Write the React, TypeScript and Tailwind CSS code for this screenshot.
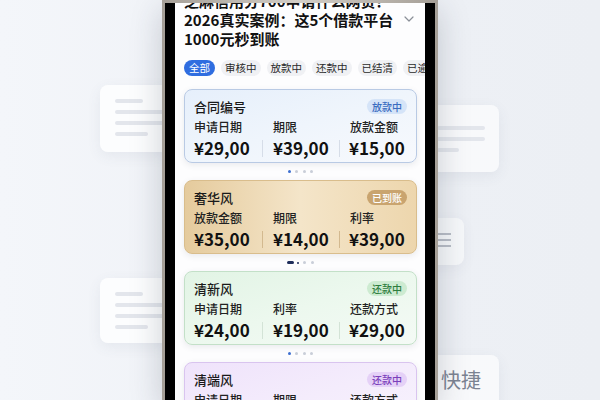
import React from "react";

type Card = {
  title: string;
  badge: string;
  labels: [string, string, string];
  values: [string, string, string];
  cardCls: string;
  badgeCls: string;
  divCls: string;
  dots: "blue" | "navy";
};

const cards: Card[] = [
  {
    title: "合同编号",
    badge: "放款中",
    labels: ["申请日期", "期限", "放款金额"],
    values: ["¥29,00", "¥39,00", "¥15,00"],
    cardCls: "border-[#b9cae4] bg-gradient-to-br from-[#e6effb] via-[#eff5fc] to-[#f7f9fd]",
    badgeCls: "bg-[#d5e4f8] text-[#3a6cc0]",
    divCls: "bg-[#d6dde8]",
    dots: "blue",
  },
  {
    title: "奢华风",
    badge: "已到账",
    labels: ["放款金额", "期限", "利率"],
    values: ["¥35,00", "¥14,00", "¥39,00"],
    cardCls: "border-[#d9bd8c] bg-gradient-to-r from-[#e5cb9d] via-[#f4e5c9] to-[#edd6ad]",
    badgeCls: "bg-[#c9a46f] text-white",
    divCls: "bg-[#d3b98f]",
    dots: "navy",
  },
  {
    title: "清新风",
    badge: "还款中",
    labels: ["申请日期", "利率", "还款方式"],
    values: ["¥24,00", "¥19,00", "¥29,00"],
    cardCls: "border-[#c3e0c8] bg-gradient-to-br from-[#e2f4e5] via-[#ecf8ee] to-[#f4faf5]",
    badgeCls: "bg-[#cdebd1] text-[#2e7d3e]",
    divCls: "bg-[#d3e3d6]",
    dots: "blue",
  },
  {
    title: "清端风",
    badge: "还款中",
    labels: ["申请日期", "期限", "还款方式"],
    values: ["¥24,00", "¥19,00", "¥29,00"],
    cardCls: "border-[#d9c4ef] bg-gradient-to-br from-[#efe3fb] via-[#f4ecfc] to-[#f8f3fd]",
    badgeCls: "bg-[#e5d1f7] text-[#7b3fbb]",
    divCls: "bg-[#e0d3ee]",
    dots: "blue",
  },
];

function Dots({ kind }: { kind: "blue" | "navy" }) {
  return (
    <div className="h-[17px] flex items-center justify-center gap-[4.5px]">
      {kind === "blue" ? (
        <span className="w-[3px] h-[3px] rounded-full bg-[#3d6fd0]" />
      ) : (
        <>
          <span className="w-[7px] h-[3px] rounded-full bg-[#1e2d5a]" />
          <span className="w-[2px] h-[2px] rounded-full bg-[#1e2d5a] -ml-[2px]" />
        </>
      )}
      <span className="w-[3px] h-[3px] rounded-full bg-[#c9ced8]" />
      <span className="w-[3px] h-[3px] rounded-full bg-[#c9ced8]" />
      {kind === "blue" && <span className="w-[3px] h-[3px] rounded-full bg-[#c9ced8]" />}
    </div>
  );
}

function LoanCard({ c }: { c: Card }) {
  return (
    <div className={`shrink-0 h-[74px] rounded-[8px] border px-[9px] pt-[8px] shadow-[0_2px_6px_rgba(60,70,90,0.10)] ${c.cardCls}`}>
      <div className="h-[17px] flex items-center justify-between">
        <span className="text-[13px] leading-[17px] font-medium text-[#1a1a1a]">{c.title}</span>
        <span className={`h-[15px] px-[5px] rounded-full text-[10px] leading-[15px] font-medium ${c.badgeCls}`}>{c.badge}</span>
      </div>
      <div className="mt-[4px] h-[16px] flex text-[12px] leading-[16px] font-medium text-[#222]">
        <span className="w-[79px]">{c.labels[0]}</span>
        <span className="w-[77px]">{c.labels[1]}</span>
        <span>{c.labels[2]}</span>
      </div>
      <div className="mt-[3px] h-[20px] flex items-center text-[17px] leading-[20px] font-bold text-[#111]">
        <span className="w-[68px]">{c.values[0]}</span>
        <span className={`w-px h-[17px] ${c.divCls}`} />
        <span className="w-[10px]" />
        <span className="w-[66px]">{c.values[1]}</span>
        <span className={`w-px h-[17px] ${c.divCls}`} />
        <span className="w-[9px]" />
        <span>{c.values[2]}</span>
      </div>
    </div>
  );
}

function Lines({ widths }: { widths: number[] }) {
  return (
    <div className="flex flex-col gap-[7px]">
      {widths.map((w, i) => (
        <span key={i} className="h-[4px] rounded-full bg-[#e3e6ec]" style={{ width: w }} />
      ))}
    </div>
  );
}

export default function App() {
  const tabs = ["审核中", "放款中", "还款中", "已结清", "已逾期"];
  return (
    <div
      className="relative w-[600px] h-[400px] overflow-hidden bg-gradient-to-r from-[#f4f6fa] via-[#eef1f6] to-[#eceff4] flex justify-center"
      style={{ fontFamily: '"Noto Sans CJK SC", "Noto Sans", sans-serif' }}
    >
      {/* decorative floating cards */}
      <div className="absolute left-[100px] top-[85px] w-[70px] h-[67px] rounded-[8px] bg-white/80 shadow-[0_4px_14px_rgba(80,90,120,0.08)] pl-[15px] pt-[14px]">
        <Lines widths={[28, 55, 55, 33]} />
      </div>
      <div className="absolute left-[100px] top-[278px] w-[70px] h-[65px] rounded-[8px] bg-white/80 shadow-[0_4px_14px_rgba(80,90,120,0.08)] pl-[15px] pt-[14px]">
        <Lines widths={[28, 55, 55, 33]} />
      </div>
      <div className="absolute left-[420px] top-[105px] w-[79px] h-[67px] rounded-[8px] bg-white/60 shadow-[0_4px_14px_rgba(80,90,120,0.08)] pl-[17px] pt-[21px]">
        <Lines widths={[48, 48, 22]} />
      </div>
      <div className="absolute left-[420px] top-[218px] w-[44px] h-[47px] rounded-[8px] bg-white/50 shadow-[0_4px_14px_rgba(80,90,120,0.06)] pl-[17px] pt-[15px]">
        <div className="flex flex-col gap-[4px]">
          <span className="w-[14px] h-[2px] bg-[#b8bdc6]" />
          <span className="w-[14px] h-[2px] bg-[#b8bdc6]" />
          <span className="w-[14px] h-[2px] bg-[#b8bdc6]" />
        </div>
      </div>
      <div className="absolute left-[420px] top-[355px] w-[79px] h-[60px] rounded-[8px] bg-white/60 shadow-[0_4px_14px_rgba(80,90,120,0.08)] pl-[21px] pt-[12px]">
        <span className="text-[20px] leading-[26px] text-[#7b8392]">快捷</span>
      </div>

      {/* phone */}
      <div className="relative w-[276px] h-[400px] p-[3px] pb-0 bg-gradient-to-r from-[#a59f97] via-[#d3cec7] to-[#a59f97] shadow-[0_10px_30px_rgba(40,50,70,0.22)]">
        <div className="w-full h-full bg-black px-[10px]">
          <div className="w-full h-full bg-[#fdfdfe] overflow-hidden pl-[9px] pr-[8px] flex flex-col">
            <div className="mt-[-12px] flex items-center">
              <div className="flex-1 text-[15px] leading-[19px] font-bold text-[#111] whitespace-nowrap">
                <div>芝麻信用分700申请什么网贷？</div>
                <div>2026真实案例：这5个借款平台</div>
                <div>1000元秒到账</div>
              </div>
              <svg width="10" height="6" viewBox="0 0 10 6" className="mr-[3px] mb-[1px]">
                <path d="M1 1 L5 5 L9 1" fill="none" stroke="#8a8f98" strokeWidth="1.2" strokeLinecap="round" strokeLinejoin="round" />
              </svg>
            </div>
            <div className="mt-[12px] h-[16px] flex gap-[6px] whitespace-nowrap">
              <span className="h-[16px] px-[5px] rounded-full bg-[#2f6de0] text-white text-[10.5px] leading-[16px]">全部</span>
              {tabs.map((t) => (
                <span key={t} className="h-[16px] px-[4px] rounded-full bg-[#f0f1f4] text-[#2a2a2a] text-[10.5px] leading-[16px]">
                  {t}
                </span>
              ))}
            </div>
            <div className="mt-[13px] flex flex-col">
              {cards.map((c, i) => (
                <React.Fragment key={i}>
                  <LoanCard c={c} />
                  <Dots kind={c.dots} />
                </React.Fragment>
              ))}
            </div>
          </div>
        </div>
      </div>
    </div>
  );
}
